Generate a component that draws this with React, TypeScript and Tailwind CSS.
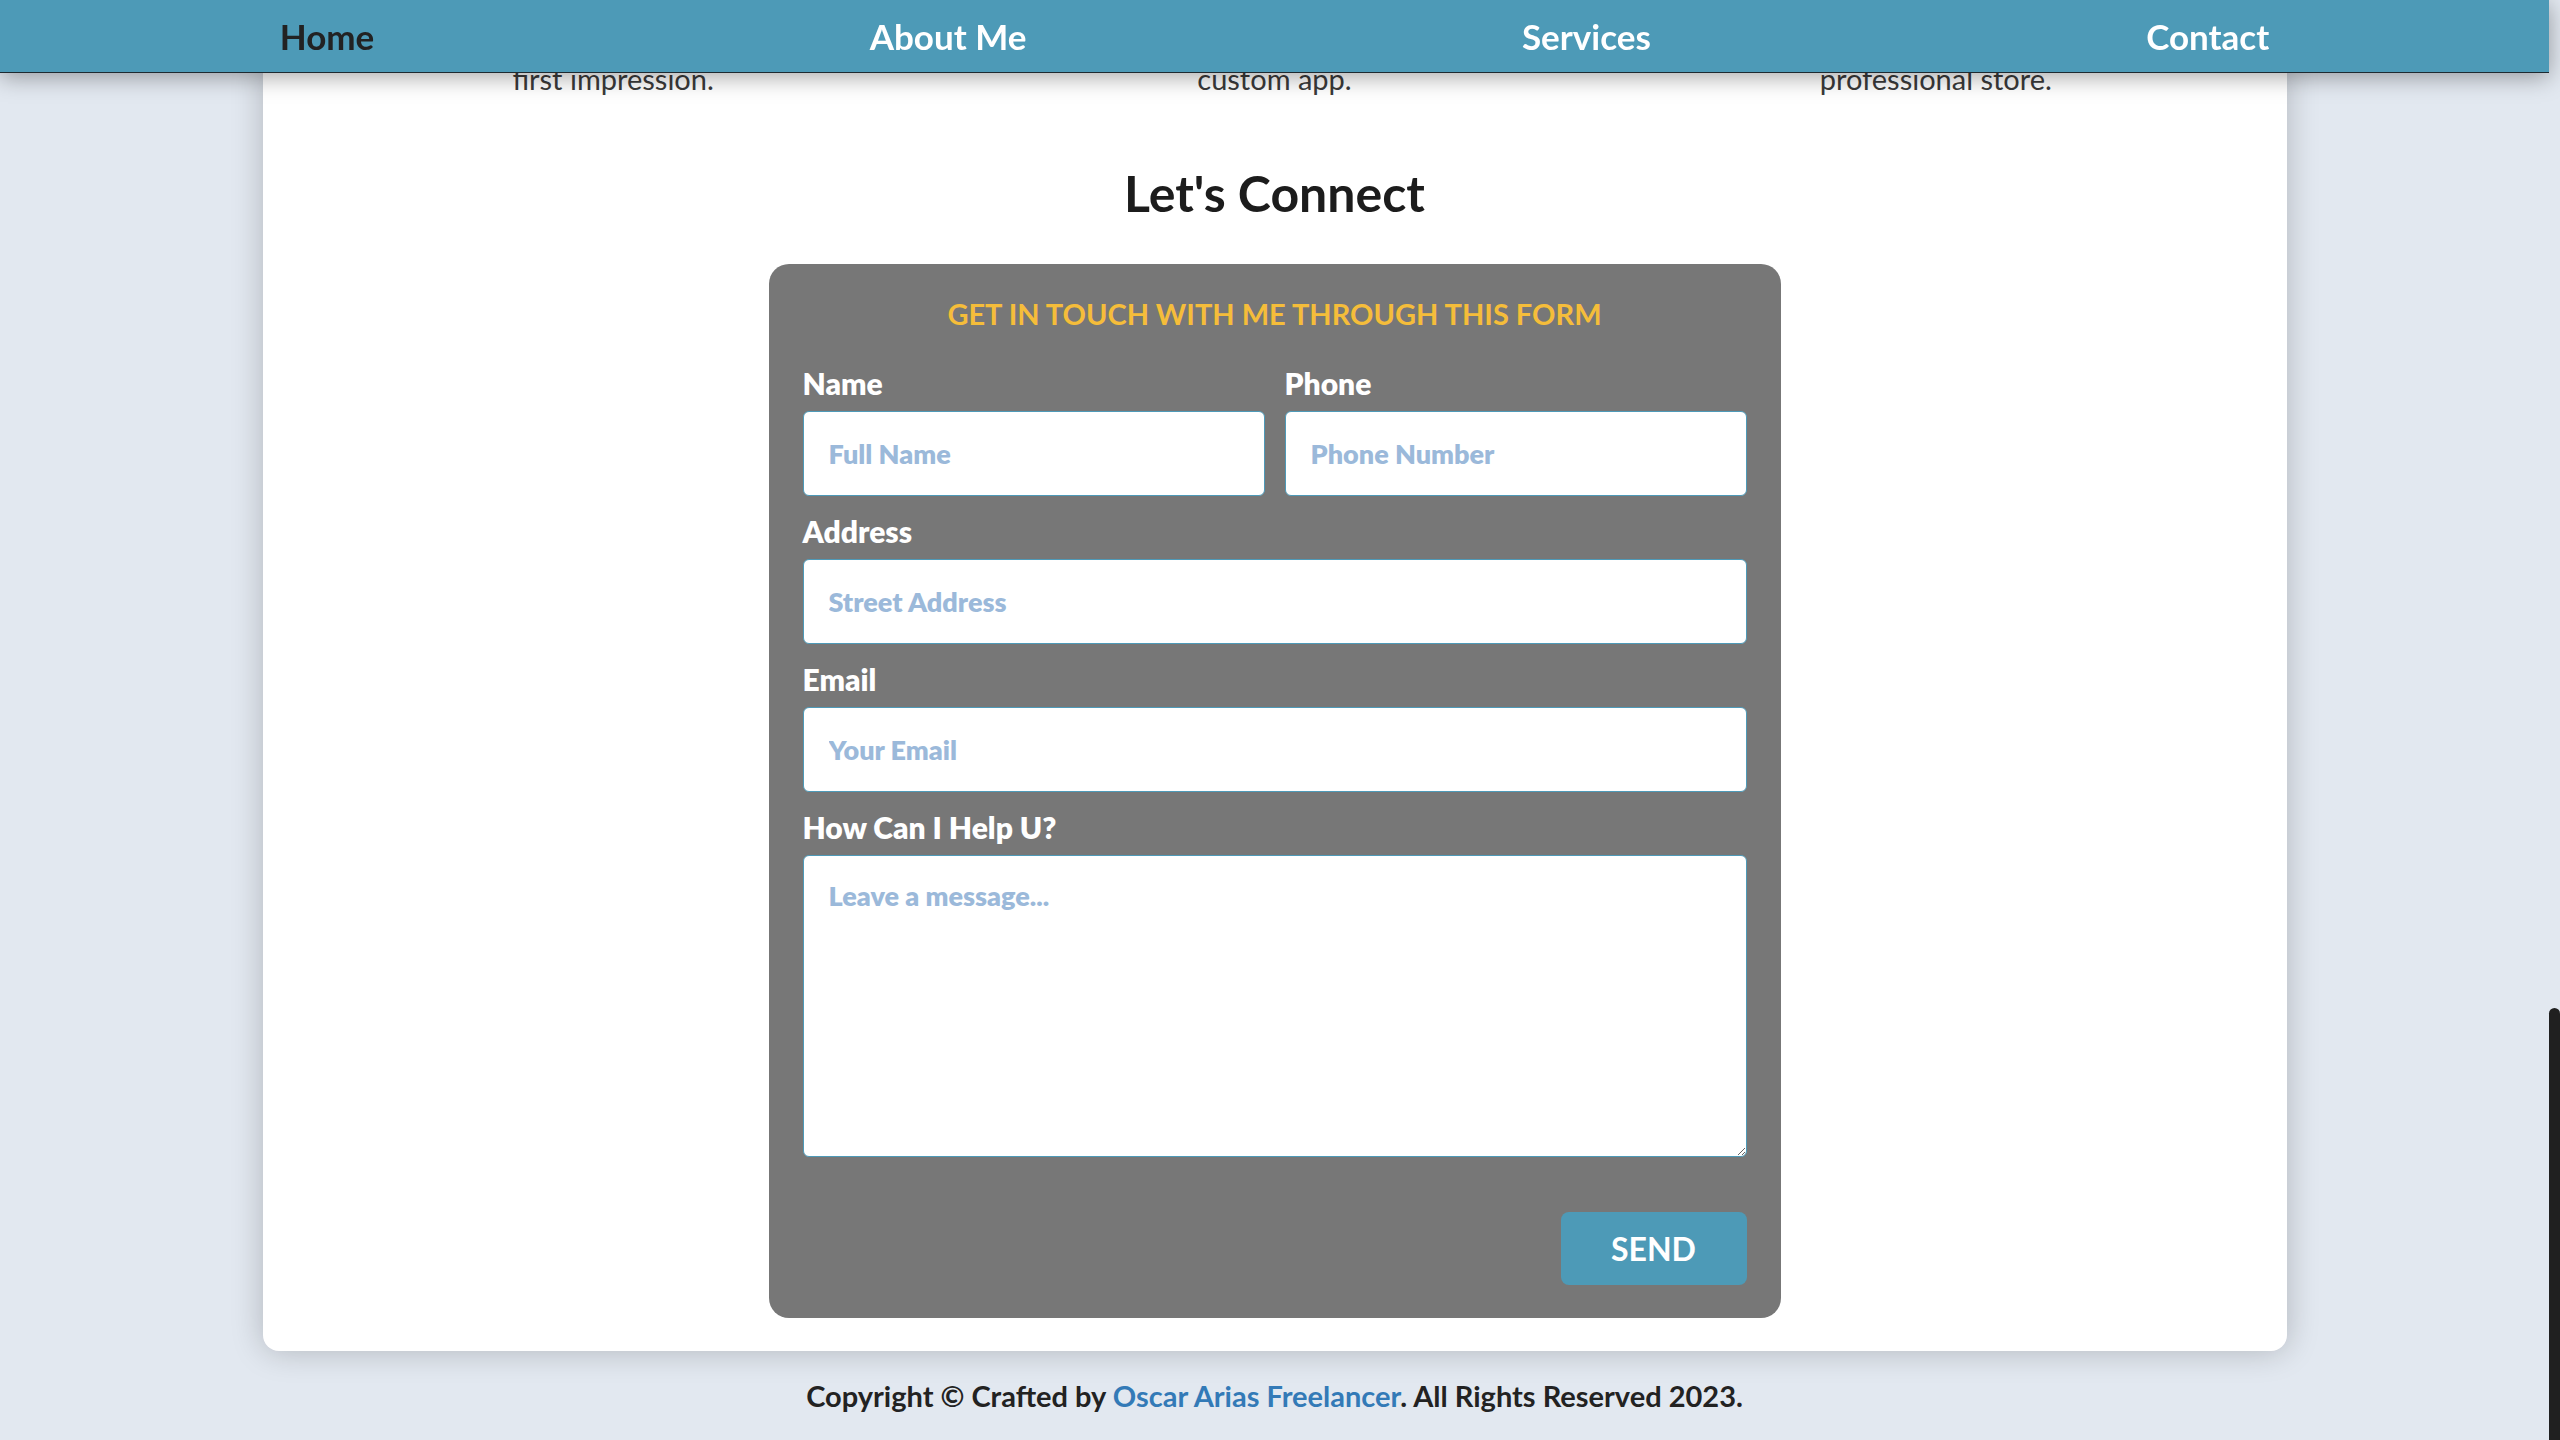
import { useState } from 'react';

const navLinks = [
  { label: 'Home', active: true },
  { label: 'About Me', active: false },
  { label: 'Services', active: false },
  { label: 'Contact', active: false },
];

const taglines = ['first impression.', 'custom app.', 'professional store.'];

const inputClass =
  'w-full h-[85px] px-[25px] bg-white border border-[#4e9ab8] rounded-md text-[27px] font-extrabold text-[#333] placeholder:text-[#9bb9da] outline-none';

const Field = ({ label, children }: { label: string; children: React.ReactNode }) => (
  <div className="flex flex-col">
    <label className="text-[30px] leading-[34px] font-extrabold text-white mb-[11px]">{label}</label>
    {children}
  </div>
);

const App = () => {
  const [message, setMessage] = useState('');

  return (
    <div className="h-screen overflow-hidden flex bg-[#e2e8f0] font-['Lato',sans-serif] text-[#222]">
      <div className="flex-1 relative">
        {/* Fixed nav */}
        <nav className="fixed top-0 left-0 right-[11px] z-10 h-[73px] bg-[#4d9ab7] border-b border-[#1e2a30] shadow-[0_4px_22px_rgba(0,0,0,0.35)] flex items-center justify-around px-8">
          {navLinks.map((link) => (
            <a
              key={link.label}
              href="#"
              className={`text-[35px] font-bold leading-none ${link.active ? 'text-[#222]' : 'text-white'}`}
            >
              {link.label}
            </a>
          ))}
        </nav>

        <main className="pt-[61px]">
          <section className="mx-auto w-[2024px] bg-white rounded-b-2xl shadow-[0_0_32px_rgba(0,0,0,0.22)] pb-[33px]">
            {/* tail of the services row */}
            <div className="grid grid-cols-3 px-5 text-center text-[29px] leading-[36px] text-[#3a3a3a]">
              {taglines.map((t) => (
                <p key={t}>{t}</p>
              ))}
            </div>

            <h2 className="mt-[66px] text-center text-[50px] leading-[60px] font-bold text-[#1c1c1c]">
              Let&apos;s Connect
            </h2>

            <form
              className="mt-[41px] mx-auto w-[1012px] bg-[#777777] rounded-[20px] px-[34px] pt-[33px] pb-[33px]"
              onSubmit={(e) => e.preventDefault()}
            >
              <h3 className="text-center text-[29px] leading-[34px] font-bold uppercase text-[#f5bd3a] mb-[35px]">
                Get in touch with me through this form
              </h3>

              <div className="flex flex-col gap-[18px]">
                <div className="grid grid-cols-2 gap-5">
                  <Field label="Name">
                    <input className={inputClass} placeholder="Full Name" />
                  </Field>
                  <Field label="Phone">
                    <input className={inputClass} placeholder="Phone Number" />
                  </Field>
                </div>
                <Field label="Address">
                  <input className={inputClass} placeholder="Street Address" />
                </Field>
                <Field label="Email">
                  <input className={inputClass} placeholder="Your Email" />
                </Field>
                <Field label="How Can I Help U?">
                  <textarea
                    value={message}
                    onChange={(e) => setMessage(e.target.value)}
                    placeholder="Leave a message..."
                    className="w-full h-[302px] px-[25px] py-[20px] bg-white border border-[#4e9ab8] rounded-md text-[27px] font-extrabold text-[#333] placeholder:text-[#9bb9da] outline-none"
                  />
                </Field>
              </div>

              <div className="flex justify-end mt-[55px]">
                <button
                  type="submit"
                  className="w-[186px] h-[73px] rounded-lg bg-[#4d9ab7] text-white text-[32px] font-bold"
                >
                  SEND
                </button>
              </div>
            </form>
          </section>

          <footer className="h-[90px] flex items-center justify-center text-[29px] font-bold text-[#222]">
            <p>
              Copyright © Crafted by <a href="#" className="text-[#337ab7]">Oscar Arias Freelancer</a>. All Rights
              Reserved 2023.
            </p>
          </footer>
        </main>
      </div>

      {/* scrollbar */}
      <div className="w-[11px] flex flex-col justify-end">
        <div className="h-[432px] bg-[#202020] rounded-t-full" />
      </div>
    </div>
  );
};

export default App;
